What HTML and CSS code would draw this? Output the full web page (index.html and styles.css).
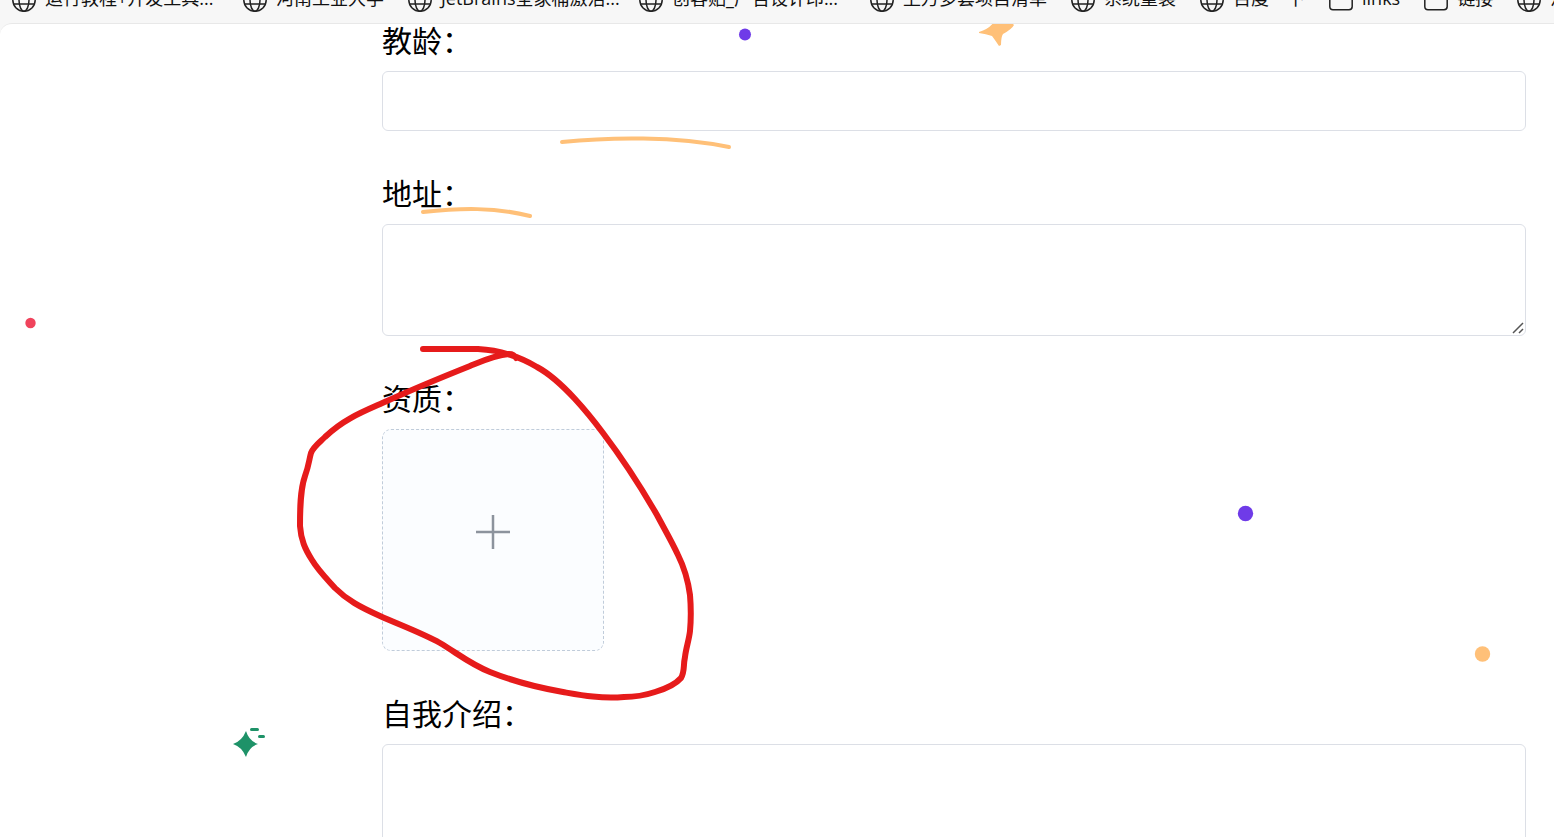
FILE: index.html
```html
<!DOCTYPE html>
<html lang="zh-CN">
<head>
    <meta charset="UTF-8">
    <meta name="viewport" content="width=device-width, initial-scale=1.0">
    <title>教师信息</title>
    <link rel="stylesheet" href="styles.css">
</head>
<body>
    <svg class="symbols" aria-hidden="true">
        <symbol id="globe" viewBox="0 0 24 24">
            <g fill="none" stroke="#222" stroke-width="1.5">
                <circle cx="12" cy="12" r="11.2"/>
                <ellipse cx="12" cy="12" rx="5" ry="11.2"/>
                <path d="M1.8 8h20.4M1.8 16h20.4"/>
            </g>
        </symbol>
        <symbol id="folder" viewBox="0 0 24 24">
            <path d="M.8 6V4.500Q.8 1.800 3.500 1.800H9l3 3h8.500q2.700 0 2.700 2.700V18.500q0 3.200-3.200 3.200H4Q.8 21.700.8 18.500z" fill="none" stroke="#222" stroke-width="1.500"/>
        </symbol>
    </svg>

    <header class="bookmarks">
        <nav class="bookmark-list">
            <a class="bookmark" href="#"><svg class="icon"><use href="#globe"/></svg><span class="fixed">运行教程+开发工具...</span></a>
            <a class="bookmark" href="#"><svg class="icon"><use href="#globe"/></svg><span>河南工业大学</span></a>
            <a class="bookmark" href="#"><svg class="icon"><use href="#globe"/></svg><span class="fixed">JetBrains全家桶激活...</span></a>
            <a class="bookmark" href="#"><svg class="icon"><use href="#globe"/></svg><span class="fixed">创客贴_广告设计印...</span></a>
            <a class="bookmark" href="#"><svg class="icon"><use href="#globe"/></svg><span>上万多套项目清单</span></a>
            <a class="bookmark" href="#"><svg class="icon"><use href="#globe"/></svg><span>系统重装</span></a>
            <a class="bookmark" href="#"><svg class="icon"><use href="#globe"/></svg><span>百度一下</span></a>
            <a class="bookmark" href="#"><svg class="icon"><use href="#folder"/></svg><span>links</span></a>
            <a class="bookmark" href="#"><svg class="icon"><use href="#folder"/></svg><span>链接</span></a>
            <a class="bookmark" href="#"><svg class="icon"><use href="#globe"/></svg><span>河南</span></a>
        </nav>
    </header>

    <main class="page">
        <svg class="decor" width="1554" height="813" viewBox="0 24 1554 813" aria-hidden="true">
            <circle cx="745" cy="34.500" r="6" fill="#6f3be8"/>
            <circle cx="1245.500" cy="513.500" r="7.700" fill="#6f3be8"/>
            <circle cx="30.500" cy="323" r="5.200" fill="#f0435c"/>
            <circle cx="1482.500" cy="654" r="7.700" fill="#ffc078"/>
            <path d="M979 32Q989 29 994 22H1011L1014 25Q1012 29 1003 34Q1001 37 1001 45L999 46Q995 40 992 36Q986 34 979 33z" fill="#ffc078"/>
            <g fill="none" stroke="#ffc078" stroke-width="4" stroke-linecap="round">
                <path d="M562 142C610 137 675 136 729 147"/>
                <path d="M423 212C460 208 495 207 530 216"/>
            </g>
            <g fill="#1e9268">
                <path d="M246 731Q249 741 258 744Q249 747 246 757Q242 747 233 744Q242 741 246 731z"/>
                <rect x="250" y="728" width="9" height="3" rx="1.500"/>
                <rect x="258" y="735" width="7" height="3" rx="1.500"/>
            </g>
        </svg>

        <form class="form">
            <div class="field">
                <label for="years">教龄：</label>
                <input type="text" id="years">
            </div>
            <div class="field">
                <label for="address">地址：</label>
                <div class="area">
                    <textarea id="address"></textarea>
                    <svg class="grip" viewBox="0 0 12 12" aria-hidden="true"><path d="M1 11L11 1M7 11l4-4" stroke="#555" stroke-width="1.500"/></svg>
                </div>
            </div>
            <div class="field">
                <label for="upload">资质：</label>
                <button type="button" class="upload" id="upload" aria-label="上传">
                    <svg class="plus" viewBox="0 0 34 34"><path d="M17 0v34M0 17h34" stroke="#8c939d" stroke-width="2.500"/></svg>
                </button>
            </div>
            <div class="field">
                <label for="intro">自我介绍：</label>
                <div class="area">
                    <textarea id="intro"></textarea>
                </div>
            </div>
        </form>

        <!-- hand-drawn marker around the upload box -->
        <svg class="decor marker" width="1554" height="813" viewBox="0 24 1554 813" aria-hidden="true">
            <path d="M423 349H478C500 350 520 357 537 367C550 374 563 386 575 399C587 412 594 421 603 433C625 462 642 489 657 515C665 530 672 542 678 555C685 569 688 580 690 595C691 607 691 620 690 631C689 640 686 648 685 657C683 666 685 671 681 678C675 685 665 689 655 692C643 696 633 697 624 697C600 699 580 695 563 692C540 688 515 682 490 672C470 664 457 653 440 643C422 633 400 625 380 616C360 607 347 600 335 588C325 577 318 570 312 560C305 549 301 540 300 526C300 510 300 490 305 476C309 465 309 460 311 453C313 447 320 442 325 437C345 418 365 411 387 401C420 386 445 376 470 366C482 361 495 355 509 354Q514 354 516 358" fill="none" stroke="#e61b1b" stroke-width="6" stroke-linecap="round" stroke-linejoin="round"/>
        </svg>
    </main>
</body>
</html>
```
FILE: styles.css
```css
* {
    box-sizing: border-box;
}
body {
    margin: 0;
    height: 100vh;
    overflow: hidden;
    display: flex;
    flex-direction: column;
    background-color: #f7f7f7;
    font-family: "Noto Sans", "Noto Sans CJK SC", sans-serif;
}
.symbols {
    display: none;
}
.bookmarks {
    height: 23px;
    flex: none;
    overflow: hidden;
}
.bookmark-list {
    display: flex;
    gap: 24px;
    margin-top: -12px;
    padding-left: 12px;
}
.bookmark {
    display: flex;
    align-items: center;
    gap: 9px;
    flex: none;
    height: 24px;
    color: #111;
    font-family: "Open Sans", "Noto Sans CJK SC", sans-serif;
    font-size: 18px;
    line-height: 24px;
    white-space: nowrap;
    text-decoration: none;
}
.bookmark span {
    padding-bottom: 4px;
}
.fixed {
    width: 174px;
}
.icon {
    width: 24px;
    height: 24px;
    flex: none;
}
.page {
    position: relative;
    flex: 1;
    min-height: 0;
    overflow: hidden;
    background-color: #fff;
    border-top: 1px solid #e8e8e8;
    border-top-left-radius: 12px;
}
.decor {
    position: absolute;
    top: 0;
    left: 0;
    pointer-events: none;
}
.form {
    position: relative;
    display: flex;
    flex-direction: column;
    gap: 43px;
    margin-top: -3px;
    padding: 0 28px 40px 382px;
}
.field {
    display: flex;
    flex-direction: column;
    align-items: flex-start;
    gap: 14px;
}
label {
    color: #000;
    font-family: "Noto Sans CJK SC", sans-serif;
    font-size: 30px;
    line-height: 36px;
}
input, textarea {
    display: block;
    width: 100%;
    padding: 8px 16px;
    border: 1px solid #dcdfe6;
    border-radius: 6px;
    background-color: #fff;
    font-family: inherit;
    font-size: 21px;
    outline: none;
}
input {
    height: 60px;
}
textarea {
    height: 112px;
    resize: vertical;
}
textarea::-webkit-resizer {
    background: transparent;
}
.area {
    position: relative;
    width: 100%;
}
.grip {
    position: absolute;
    right: 2px;
    bottom: 2px;
    width: 12px;
    height: 12px;
    pointer-events: none;
}
.upload {
    display: flex;
    align-items: center;
    justify-content: center;
    width: 222px;
    height: 222px;
    padding: 0 0 16px;
    border: 1px dashed #c0ccda;
    border-radius: 9px;
    background-color: #fbfdff;
    cursor: pointer;
}
.plus {
    width: 34px;
    height: 34px;
}
```
